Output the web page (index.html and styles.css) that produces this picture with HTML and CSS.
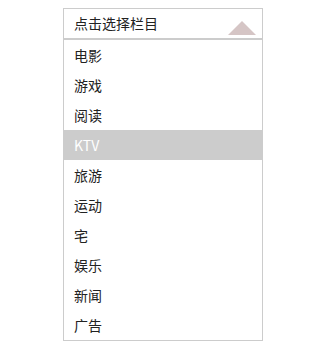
FILE: index.html
```html
<!DOCTYPE html>
<html lang="zh-CN">
<head>
<meta charset="utf-8">
<title>选择栏目</title>
<link rel="stylesheet" href="styles.css">
</head>
<body>
<div class="select">
  <div class="select-head">
    <span class="select-title">点击选择栏目</span>
    <span class="arrow"></span>
  </div>
  <ul class="options">
    <li class="option">电影</li>
    <li class="option">游戏</li>
    <li class="option">阅读</li>
    <li class="option active">KTV</li>
    <li class="option">旅游</li>
    <li class="option">运动</li>
    <li class="option">宅</li>
    <li class="option">娱乐</li>
    <li class="option">新闻</li>
    <li class="option">广告</li>
  </ul>
</div>
</body>
</html>
```
FILE: styles.css
```css
html, body {
  margin: 0;
  padding: 0;
  background: #fff;
}
body {
  padding: 8px 0 0 63px;
  font-family: "Noto Sans CJK SC", "Noto Sans", sans-serif;
  font-size: 14px;
  color: #222;
}
.select {
  width: 198px;
  border: 1px solid #ccc;
}
.select-head {
  height: 29px;
  border-bottom: 2px solid #ccc;
  display: flex;
  align-items: center;
  justify-content: space-between;
  padding: 0 6px 0 10px;
}
.select-title {
  line-height: 29px;
}
.arrow {
  width: 0;
  height: 0;
  border-left: 14px solid transparent;
  border-right: 14px solid transparent;
  border-bottom: 14px solid #d5c5c5;
  margin-top: 8px;
}
.options {
  list-style: none;
  margin: 0;
  padding: 0;
}
.option {
  height: 30px;
  line-height: 30px;
  padding-left: 10px;
}
.option.active {
  background: #ccc;
  color: #fff;
}
```
